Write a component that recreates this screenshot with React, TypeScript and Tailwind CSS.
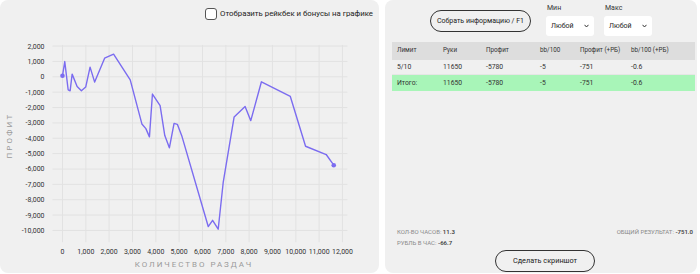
import {ReactElement} from 'react';

const FONT = 'Roboto, "Noto Sans", sans-serif';

// points of the profit line, in page pixels
const line:[number,number][] = [
  [62,76],[64.3,61.7],[67.7,90],[69.7,91],[71.7,74.3],[76.7,86.7],[81,91],[85.3,87.3],[89.7,67.3],
  [94.3,82.3],[104.3,58.3],[113.3,54.3],[130,80],[141.7,124.3],[145.7,129],[149.3,137.3],[152.3,94.3],
  [160,106],[164.7,136],[169.3,148.3],[174,123.7],[177.3,124.7],[182,137],[208.3,227.3],[212.7,221],
  [218.3,230],[223.3,183.3],[234.3,117.3],[245.3,106.7],[251,121],[261.7,82],[290.7,96.7],[306,146.7],
  [326.7,155],[334.3,165.7]
];

const yTicks = [2000,1000,0,-1000,-2000,-3000,-4000,-5000,-6000,-7000,-8000,-9000,-10000];
const xTicks = [0,1000,2000,3000,4000,5000,6000,7000,8000,9000,10000,11000,12000];

function px(v:number){return 62+v*0.02342;}
function py(v:number){return 77-v*0.01542;}
function fmt(v:number){return v.toLocaleString('en-US');}

function Chart() : ReactElement {
  return <svg width={379} height={246} viewBox="0 28 379 246" style={{fontFamily:FONT}}>
    {yTicks.map(function(t){
      return <line key={'h'+t} x1={52} x2={348} y1={py(t)} y2={py(t)} stroke="#e2e2e2" strokeWidth={1}/>;
    })}
    {xTicks.map(function(t){
      return <line key={'v'+t} x1={px(t)} x2={px(t)} y1={45} y2={243} stroke="#e2e2e2" strokeWidth={1}/>;
    })}
    {yTicks.map(function(t){
      return <text key={'yl'+t} x={44} y={py(t)+2.5} fontSize={7} fill="#333" textAnchor="end">{fmt(t)}</text>;
    })}
    {xTicks.map(function(t){
      return <text key={'xl'+t} x={px(t)} y={255} fontSize={7} fill="#333" textAnchor="middle">{fmt(t)}</text>;
    })}
    <text x={194} y={268} fontSize={8} fill="#9a9a9a" textAnchor="middle" letterSpacing={2}>КОЛИЧЕСТВО РАЗДАЧ</text>
    <text x={0} y={0} fontSize={8} fill="#9a9a9a" textAnchor="middle" letterSpacing={2.2} transform="translate(11 136) rotate(-90)">ПРОФИТ</text>
    <polyline points={line.map(function(p){return p[0]+','+p[1];}).join(' ')} fill="none" stroke="#7b6cf0" strokeWidth={1.4} strokeLinejoin="round"/>
    <circle cx={62} cy={76} r={2.3} fill="#7b6cf0"/>
    <circle cx={334.3} cy={165.7} r={2.3} fill="#7b6cf0"/>
  </svg>;
}

function Select(props:{label:string}) : ReactElement {
  return <div className="flex flex-col">
    <span className="text-[7px] text-[#333] leading-[10px] pl-[1px] mb-[3px]">{props.label}</span>
    <div className="w-[48px] h-[20px] bg-white rounded-[3px] flex items-center justify-between pl-[5px] pr-[5px]">
      <span className="text-[7px] text-[#222]">Любой</span>
      <svg width="5" height="4" viewBox="0 0 5 4"><path d="M0.5 0.8 L2.5 3 L4.5 0.8" fill="none" stroke="#333" strokeWidth="1"/></svg>
    </div>
  </div>;
}

const cols = 'grid grid-cols-[46px_43px_54px_40px_51px_1fr] pl-[5px] items-center';

export default function App() : ReactElement {
  return <div className="w-[700px] h-[274px] bg-white flex gap-[6px] pb-[1px]" style={{fontFamily:FONT}}>
    <div className="w-[379px] h-[273px] bg-[#f0f0f0] rounded-[8px] flex flex-col overflow-hidden">
      <div className="h-[28px] flex justify-end items-start pt-[8px] pr-[6px] gap-[3px]">
        <div className="w-[12px] h-[12px] bg-white border border-[#555] rounded-[3px]"/>
        <span className="text-[7.8px] text-[#222] leading-[12px]">Отобразить рейкбек и бонусы на графике</span>
      </div>
      <Chart/>
    </div>
    <div className="w-[312px] h-[273px] bg-[#f0f0f0] rounded-[8px] flex flex-col">
      <div className="h-[42px] flex justify-center items-start pt-[3px] gap-[10px]">
        <button className="mt-[7px] mr-[5px] w-[101px] h-[22px] rounded-full border border-[#333] text-[7px] text-[#222] whitespace-nowrap">Собрать информацию / F1</button>
        <Select label="Мин"/>
        <Select label="Макс"/>
      </div>
      <div className="ml-[7px] mr-[2px] text-[6.3px] text-[#333]">
        <div className={cols+' h-[18px] bg-[#dddddd]'}>
          <span>Лимит</span><span>Руки</span><span>Профит</span><span>bb/100</span><span>Профит (+РБ)</span><span>bb/100 (+РБ)</span>
        </div>
        <div className={cols+' h-[15px] text-[6.8px] border-b border-[#e6e6e6]'}>
          <span>5/10</span><span>11650</span><span>-5780</span><span>-5</span><span>-751</span><span>-0.6</span>
        </div>
        <div className={cols+' h-[16px] text-[6.8px] bg-[#a8f5b8]'}>
          <span>Итого:</span><span>11650</span><span>-5780</span><span>-5</span><span>-751</span><span>-0.6</span>
        </div>
      </div>
      <div className="flex-1"/>
      <div className="flex justify-between items-start pl-[12px] pr-[4px] text-[6px] leading-[11px] text-[#8a8a8a]">
        <div className="flex flex-col">
          <span>КОЛ-ВО ЧАСОВ: <b className="text-[#444] font-semibold">11.3</b></span>
          <span>РУБЛЬ В ЧАС: <b className="text-[#444] font-semibold">-66.7</b></span>
        </div>
        <span>ОБЩИЙ РЕЗУЛЬТАТ: <b className="text-[#444] font-semibold">-751.0</b></span>
      </div>
      <div className="flex justify-center pl-[8px] pt-[2px] pb-[1px]">
        <button className="w-[100px] h-[22px] rounded-full border border-[#333] text-[7.3px] text-[#222]">Сделать скриншот</button>
      </div>
    </div>
  </div>;
}
